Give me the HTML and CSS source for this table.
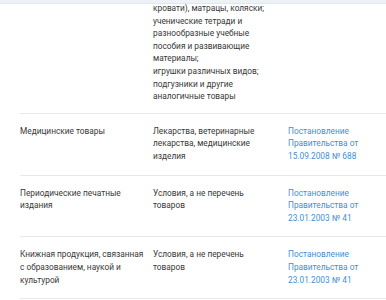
FILE: index.html
```html
<!DOCTYPE html>
<html lang="ru">
<head>
<meta charset="utf-8">
<title>Товары</title>
<link rel="stylesheet" href="styles.css">
</head>
<body>
<div class="header-edge"></div>
<div class="table">
  <div class="row row-cut">
    <div class="cell"></div>
    <div class="cell">кровати), матрацы, коляски;<br>ученические тетради и разнообразные учебные пособия и развивающие материалы;<br>игрушки различных видов;<br>подгузники и другие аналогичные товары</div>
    <div class="cell"></div>
  </div>
  <div class="row">
    <div class="cell">Медицинские товары</div>
    <div class="cell">Лекарства, ветеринарные лекарства, медицинские изделия</div>
    <div class="cell"><a class="link" href="#">Постановление Правительства от 15.09.2008 № 688</a></div>
  </div>
  <div class="row">
    <div class="cell">Периодические печатные издания</div>
    <div class="cell">Условия, а не перечень товаров</div>
    <div class="cell"><a class="link" href="#">Постановление Правительства от 23.01.2003 № 41</a></div>
  </div>
  <div class="row">
    <div class="cell">Книжная продукция, связанная с образованием, наукой и культурой</div>
    <div class="cell">Условия, а не перечень товаров</div>
    <div class="cell"><a class="link" href="#">Постановление Правительства от 23.01.2003 № 41</a></div>
  </div>
  <div class="row row-end"></div>
</div>
</body>
</html>
```

FILE: styles.css
```css
html, body {
  margin: 0;
  padding: 0;
  background: #ffffff;
  overflow: hidden;
}

body {
  font-family: Roboto, "Noto Sans", "Liberation Sans", sans-serif;
  font-size: 8.3px;
  line-height: 12.6px;
  color: #383838;
}

.header-edge {
  position: absolute;
  top: 0;
  left: 0;
  right: 0;
  height: 3px;
  background: #edf2f7;
  border-bottom: 1px solid #e4e6e8;
}

.table {
  margin-top: 2px;
  padding-left: 20px;
}

.row {
  display: grid;
  grid-template-columns: 133px 135px 1fr;
  padding: 11px 0 12px;
  border-top: 1px solid #e8e8e8;
}

.cell {
  padding-right: 12px;
}

.row > .cell:first-child {
  padding-right: 8px;
}

.row-cut {
  border-top: none;
  padding-top: 0;
  padding-bottom: 10px;
}

.row-end {
  padding: 0;
}

.link {
  color: #3f8fd8;
  text-decoration: none;
}
```
